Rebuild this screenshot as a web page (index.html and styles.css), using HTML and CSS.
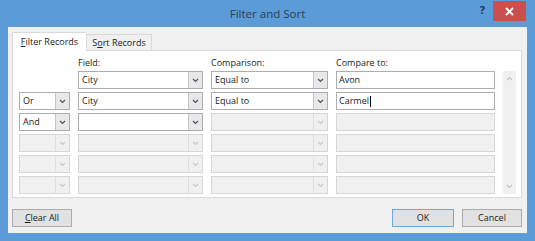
FILE: index.html
```html
<!DOCTYPE html>
<html lang="en">
<head>
<meta charset="utf-8">
<title>Filter and Sort</title>
<link rel="stylesheet" href="styles.css">
</head>
<body>
<div class="window">
  <div class="titlebar">
    <div class="tb-side"></div>
    <div class="title">Filter and Sort</div>
    <div class="tb-side tb-controls">
      <span class="help">?</span>
      <span class="close"><svg width="9" height="9" viewBox="0 0 9 9"><path d="M1 1 L8 8 M8 1 L1 8" stroke="#fff" stroke-width="1.8" fill="none"/></svg></span>
    </div>
  </div>
  <div class="dialog">
    <div class="tabs">
      <div class="tab tab-active"><u>F</u>ilter Records</div>
      <div class="tab">S<u>o</u>rt Records</div>
    </div>
    <div class="panel">
      <div class="grid">
        <div></div>
        <div class="lbl">Field:</div>
        <div class="lbl">Comparison:</div>
        <div class="lbl">Compare to:</div>
        <div></div>
        <div class="scrollbar">
          <svg width="7" height="5" viewBox="0 0 7 5"><path d="M1 4 L3.5 1.5 L6 4" stroke="#c4c4c4" stroke-width="1.2" fill="none"/></svg>
          <svg width="7" height="5" viewBox="0 0 7 5"><path d="M1 1 L3.5 3.5 L6 1" stroke="#c4c4c4" stroke-width="1.2" fill="none"/></svg>
        </div>

        <!-- row 1 -->
        <div></div>
        <div class="combo"><span class="val">City</span><span class="btn"><svg width="7" height="5" viewBox="0 0 7 5"><path d="M1 1 L3.5 3.5 L6 1" stroke="#4a5565" stroke-width="1.2" fill="none"/></svg></span></div>
        <div class="combo"><span class="val">Equal to</span><span class="btn"><svg width="7" height="5" viewBox="0 0 7 5"><path d="M1 1 L3.5 3.5 L6 1" stroke="#4a5565" stroke-width="1.2" fill="none"/></svg></span></div>
        <div class="input">Avon</div>

        <!-- row 2 -->
        <div class="combo"><span class="val">Or</span><span class="btn"><svg width="7" height="5" viewBox="0 0 7 5"><path d="M1 1 L3.5 3.5 L6 1" stroke="#4a5565" stroke-width="1.2" fill="none"/></svg></span></div>
        <div class="combo"><span class="val">City</span><span class="btn"><svg width="7" height="5" viewBox="0 0 7 5"><path d="M1 1 L3.5 3.5 L6 1" stroke="#4a5565" stroke-width="1.2" fill="none"/></svg></span></div>
        <div class="combo"><span class="val">Equal to</span><span class="btn"><svg width="7" height="5" viewBox="0 0 7 5"><path d="M1 1 L3.5 3.5 L6 1" stroke="#4a5565" stroke-width="1.2" fill="none"/></svg></span></div>
        <div class="input">Carmel<span class="caret"></span></div>

        <!-- row 3 -->
        <div class="combo"><span class="val">And</span><span class="btn"><svg width="7" height="5" viewBox="0 0 7 5"><path d="M1 1 L3.5 3.5 L6 1" stroke="#4a5565" stroke-width="1.2" fill="none"/></svg></span></div>
        <div class="combo"><span class="val"></span><span class="btn"><svg width="7" height="5" viewBox="0 0 7 5"><path d="M1 1 L3.5 3.5 L6 1" stroke="#4a5565" stroke-width="1.2" fill="none"/></svg></span></div>
        <div class="combo disabled"><span class="val"></span><span class="btn"><svg width="7" height="5" viewBox="0 0 7 5"><path d="M1 1 L3.5 3.5 L6 1" stroke="#c8c8c8" stroke-width="1.2" fill="none"/></svg></span></div>
        <div class="input disabled"></div>

        <!-- row 4 -->
        <div class="combo disabled"><span class="val"></span><span class="btn"><svg width="7" height="5" viewBox="0 0 7 5"><path d="M1 1 L3.5 3.5 L6 1" stroke="#c8c8c8" stroke-width="1.2" fill="none"/></svg></span></div>
        <div class="combo disabled"><span class="val"></span><span class="btn"><svg width="7" height="5" viewBox="0 0 7 5"><path d="M1 1 L3.5 3.5 L6 1" stroke="#c8c8c8" stroke-width="1.2" fill="none"/></svg></span></div>
        <div class="combo disabled"><span class="val"></span><span class="btn"><svg width="7" height="5" viewBox="0 0 7 5"><path d="M1 1 L3.5 3.5 L6 1" stroke="#c8c8c8" stroke-width="1.2" fill="none"/></svg></span></div>
        <div class="input disabled"></div>

        <!-- row 5 -->
        <div class="combo disabled"><span class="val"></span><span class="btn"><svg width="7" height="5" viewBox="0 0 7 5"><path d="M1 1 L3.5 3.5 L6 1" stroke="#c8c8c8" stroke-width="1.2" fill="none"/></svg></span></div>
        <div class="combo disabled"><span class="val"></span><span class="btn"><svg width="7" height="5" viewBox="0 0 7 5"><path d="M1 1 L3.5 3.5 L6 1" stroke="#c8c8c8" stroke-width="1.2" fill="none"/></svg></span></div>
        <div class="combo disabled"><span class="val"></span><span class="btn"><svg width="7" height="5" viewBox="0 0 7 5"><path d="M1 1 L3.5 3.5 L6 1" stroke="#c8c8c8" stroke-width="1.2" fill="none"/></svg></span></div>
        <div class="input disabled"></div>

        <!-- row 6 -->
        <div class="combo disabled"><span class="val"></span><span class="btn"><svg width="7" height="5" viewBox="0 0 7 5"><path d="M1 1 L3.5 3.5 L6 1" stroke="#c8c8c8" stroke-width="1.2" fill="none"/></svg></span></div>
        <div class="combo disabled"><span class="val"></span><span class="btn"><svg width="7" height="5" viewBox="0 0 7 5"><path d="M1 1 L3.5 3.5 L6 1" stroke="#c8c8c8" stroke-width="1.2" fill="none"/></svg></span></div>
        <div class="combo disabled"><span class="val"></span><span class="btn"><svg width="7" height="5" viewBox="0 0 7 5"><path d="M1 1 L3.5 3.5 L6 1" stroke="#c8c8c8" stroke-width="1.2" fill="none"/></svg></span></div>
        <div class="input disabled"></div>
      </div>
    </div>
    <div class="buttons">
      <div class="button btn-clear"><u>C</u>lear All</div>
      <div class="spacer"></div>
      <div class="button btn-ok">OK</div>
      <div class="button btn-cancel">Cancel</div>
    </div>
  </div>
</div>
</body>
</html>
```
FILE: styles.css
```css
html, body {
  margin: 0;
  padding: 0;
}
body {
  font-family: "Open Sans", "Noto Sans", sans-serif;
  font-size: 9px;
  color: #1b1b1b;
}
.window {
  width: 535px;
  height: 241px;
  background: #5b9bd7;
  display: flex;
  flex-direction: column;
}
.titlebar {
  height: 27px;
  flex: none;
  display: grid;
  grid-template-columns: 1fr auto 1fr;
}
.title {
  font-size: 11.5px;
  line-height: 27px;
  color: #2b3f58;
}
.tb-controls {
  display: flex;
  justify-content: flex-end;
  align-items: flex-start;
  padding-top: 1px;
  padding-right: 9px;
}
.help {
  font-weight: bold;
  font-size: 11px;
  line-height: 18px;
  color: #1c3552;
  margin-right: 8px;
}
.close {
  width: 33px;
  height: 20px;
  background: #c9504f;
  display: flex;
  align-items: center;
  justify-content: center;
}
.dialog {
  flex: 1;
  margin: 0 8px 8px 8px;
  background: #f0f0f0;
  padding: 5px 5px 0 4px;
  display: flex;
  flex-direction: column;
}
.tabs {
  display: flex;
  align-items: flex-end;
  height: 18px;
  position: relative;
  z-index: 1;
}
.tab {
  box-sizing: border-box;
  height: 16px;
  border: 1px solid #d9d9d9;
  border-bottom: none;
  background: #f0f0f0;
  text-align: center;
  line-height: 15px;
  width: 66px;
}
.tab-active {
  width: 74px;
  height: 19px;
  margin-bottom: -1px;
  background: #fff;
  line-height: 17px;
  border-right: none;
}
.tab u { text-decoration-thickness: 1px; text-underline-offset: 1px; }
.panel {
  border: 1px solid #d9d9d9;
  background: #fff;
  padding: 6px 0 3px 6px;
}
.grid {
  display: grid;
  grid-template-columns: 51px 125px 117px 159px 13px;
  grid-template-rows: 11px repeat(6, 18px);
  column-gap: 8px;
  row-gap: 3px;
}
.lbl {
  line-height: 11px;
}
.scrollbar {
  grid-column: 5;
  grid-row: 2 / 8;
  background: #f0f0f0;
  display: flex;
  flex-direction: column;
  justify-content: space-between;
  align-items: center;
  padding: 5px 0 5px;
}
.combo, .input {
  box-sizing: border-box;
  height: 18px;
  border: 1px solid #abadb3;
  background: #fff;
}
.combo {
  display: flex;
}
.combo .val {
  flex: 1;
  padding-left: 3px;
  line-height: 16px;
}
.combo .btn {
  width: 13px;
  border-left: 1px solid #c4c4c4;
  background: #e8e8e8;
  display: flex;
  align-items: center;
  justify-content: center;
}
.input {
  padding-left: 2px;
  line-height: 16px;
  display: flex;
  align-items: center;
}
.caret {
  display: inline-block;
  width: 1px;
  height: 11px;
  background: #000;
  margin-left: 0.5px;
}
.combo.disabled, .input.disabled {
  border-color: #d6d6d6;
  background: #f0f0f0;
}
.combo.disabled .btn {
  border-left-color: #dedede;
  background: #f0f0f0;
}
.buttons {
  display: flex;
  margin-top: 11px;
  height: 18px;
}
.spacer { flex: 1; }
.button {
  box-sizing: border-box;
  height: 18px;
  border: 1px solid #adadad;
  background: #e1e1e1;
  text-align: center;
  line-height: 16px;
}
.btn-clear { width: 60px; }
.btn-ok {
  width: 62px;
  border-color: #6aaae4;
  margin-right: 8px;
}
.btn-cancel { width: 60px; }
```
